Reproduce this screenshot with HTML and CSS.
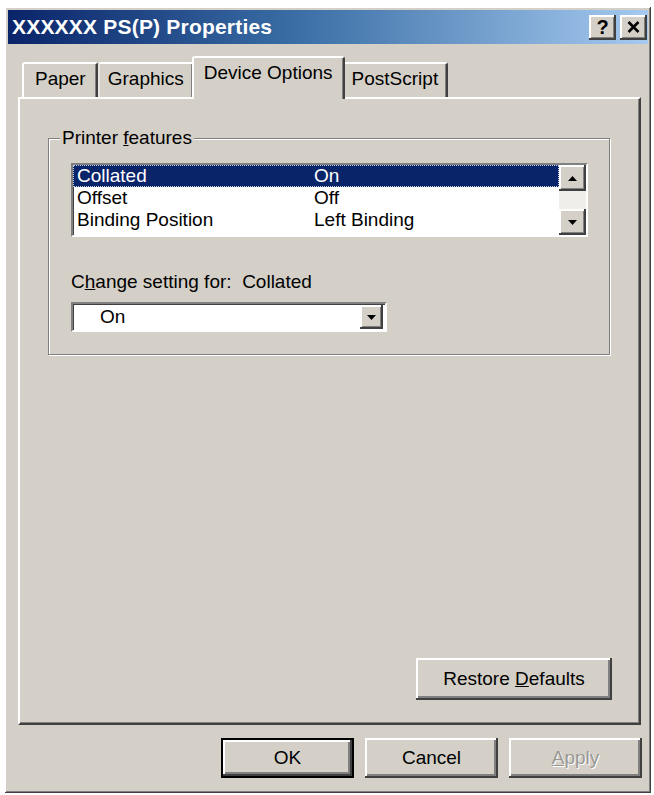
FILE: index.html
```html
<!DOCTYPE html>
<html lang="en">
<head>
  <meta charset="UTF-8">
  <title>PS(P) Properties</title>
  <link rel="stylesheet" href="styles.css">
</head>
<body>
  <div class="window">
    <div class="titlebar">
      <span class="title">XXXXXX PS(P) Properties</span>
      <div class="caption-buttons">
        <span class="cap-btn help">?</span>
        <span class="cap-btn close">
          <svg width="13" height="12" viewBox="0 0 13 12">
            <path d="M1.5 1 L11.5 11 M11.5 1 L1.5 11" stroke="#000" stroke-width="2.6" fill="none"/>
          </svg>
        </span>
      </div>
    </div>

    <div class="dialog">
      <div class="tabs">
        <div class="tab first">Paper</div>
        <div class="tab">Graphics</div>
        <div class="tab active">Device Options</div>
        <div class="tab">PostScript</div>
      </div>

      <div class="panel">
        <fieldset class="group">
          <legend>Printer <u>f</u>eatures</legend>

          <div class="listbox">
            <div class="list-rows">
              <div class="row selected"><span class="col-name">Collated</span><span>On</span></div>
              <div class="row"><span class="col-name">Offset</span><span>Off</span></div>
              <div class="row"><span class="col-name">Binding Position</span><span>Left Binding</span></div>
            </div>
            <div class="scrollbar">
              <div class="sb-btn">
                <svg width="9" height="5" viewBox="0 0 9 5"><path d="M0 5 L4.5 0 L9 5 Z" fill="#000"/></svg>
              </div>
              <div class="sb-track"></div>
              <div class="sb-btn">
                <svg width="9" height="5" viewBox="0 0 9 5"><path d="M0 0 L9 0 L4.5 5 Z" fill="#000"/></svg>
              </div>
            </div>
          </div>

          <div class="setting-label">C<u>h</u>ange setting for:&nbsp; Collated</div>
          <div class="combo">
            <span class="combo-value">On</span>
            <div class="combo-btn">
              <svg width="9" height="5" viewBox="0 0 9 5"><path d="M0 0 L9 0 L4.5 5 Z" fill="#000"/></svg>
            </div>
          </div>
        </fieldset>

        <div class="panel-actions">
          <button class="btn restore">Restore <u>D</u>efaults</button>
        </div>
      </div>

      <div class="dialog-buttons">
        <button class="btn default">OK</button>
        <button class="btn">Cancel</button>
        <button class="btn" disabled><u>A</u>pply</button>
      </div>
    </div>
  </div>
</body>
</html>
```

FILE: styles.css
```css
body {
  margin: 0;
  padding: 7px 0 0 5px;
  background: #fff;
  font-family: "Liberation Sans", Arial, sans-serif;
  font-size: 19px;
  color: #000;
}
.window {
  width: 646px;
  height: 786px;
  box-sizing: border-box;
  padding: 3px;
  background: #d4d0c8;
  display: flex;
  flex-direction: column;
  box-shadow: inset -1px -1px #404040, inset 1px 1px #fff, inset -2px -2px #808080;
}

/* caption */
.titlebar {
  height: 34px;
  flex: none;
  display: flex;
  align-items: center;
  justify-content: space-between;
  padding: 0 1px 0 4px;
  background: linear-gradient(to right, #0a246a 0%, #3a6ea5 45%, #a6caf0 100%);
}
.title {
  color: #fff;
  font-weight: bold;
  font-size: 21px;
  letter-spacing: 0.2px;
}
.caption-buttons {
  display: flex;
  gap: 4px;
}
.cap-btn {
  width: 27px;
  height: 25px;
  box-sizing: border-box;
  display: flex;
  align-items: center;
  justify-content: center;
  background: #d4d0c8;
  box-shadow: inset -2px -2px #404040, inset 2px 2px #fff, inset -3px -3px #808080;
  font-weight: bold;
  font-size: 20px;
}

.dialog {
  flex: 1;
  display: flex;
  flex-direction: column;
  padding: 12px 6px 12px 10px;
}

/* tab strip */
.tabs {
  height: 41px;
  display: flex;
  align-items: flex-end;
  padding-left: 4px;
}
.tab {
  height: 35px;
  box-sizing: border-box;
  padding: 4px 8px 0;
  line-height: 22px;
  border-top: 2px solid #fff;
  border-left: 2px solid #fff;
  border-right: 2px solid #404040;
  border-radius: 3px 3px 0 0;
  box-shadow: inset -1px 0 #808080;
  white-space: nowrap;
}
.tab.first {
  padding: 4px 10px 0 11px;
}
.tab + .tab {
  border-left-color: #e8e6e1;
}
.tab.active {
  height: 43px;
  margin: 0 -2px -2px;
  padding: 4px 10px 0 10px;
  border-left-color: #fff;
  background: #d4d0c8;
  position: relative;
  z-index: 1;
}
.tab.active + .tab {
  border-left: none;
  padding-left: 9px;
}

/* page body */
.panel {
  flex: 1;
  margin-right: 1px;
  display: flex;
  flex-direction: column;
  padding: 28px 27px 23px 28px;
  border-top: 2px solid #fff;
  border-left: 2px solid #fff;
  border-right: 2px solid #404040;
  border-bottom: 2px solid #404040;
  box-shadow: inset -1px -1px #808080;
}

.group {
  margin: 0 2px 0 0;
  padding: 14px 21px 22px 22px;
  border: 1px solid #808080;
  box-shadow: inset 1px 1px #fff, 1px 1px #fff;
}
.group legend {
  margin-left: -11px;
  padding: 0 2px;
  line-height: 22px;
  background: #d4d0c8;
}

/* list of features */
.listbox {
  width: 517px;
  height: 74px;
  box-sizing: border-box;
  display: flex;
  background: #fff;
  border: 2px solid;
  border-color: #808080 #fff #fff #808080;
  box-shadow: inset 1px 1px #404040;
}
.list-rows {
  flex: 1;
}
.row {
  height: 22px;
  box-sizing: border-box;
  display: flex;
  line-height: 20px;
  padding-left: 3px;
  border: 1px solid transparent;
}
.row.selected {
  background: #0a246a;
  color: #fff;
  border: 1px dotted #c9cde0;
}
.col-name {
  width: 237px;
}
.scrollbar {
  width: 27px;
  display: flex;
  flex-direction: column;
}
.sb-btn {
  height: 26px;
  display: flex;
  align-items: center;
  justify-content: center;
  background: #d4d0c8;
  box-shadow: inset -2px -2px #404040, inset 2px 2px #fff, inset -3px -3px #808080;
}
.sb-track {
  flex: 1;
  background: #efeeea;
}

.setting-label {
  margin-top: 34px;
  line-height: 22px;
}

/* drop-down */
.combo {
  width: 316px;
  height: 30px;
  margin-top: 9px;
  box-sizing: border-box;
  display: flex;
  align-items: center;
  justify-content: space-between;
  padding: 0 2px 0 27px;
  background: #fff;
  border: 2px solid;
  border-color: #808080 #fff #fff #808080;
  box-shadow: inset 1px 1px #404040;
}
.combo-btn {
  width: 23px;
  height: 24px;
  display: flex;
  align-items: center;
  justify-content: center;
  background: #d4d0c8;
  box-shadow: inset -2px -2px #404040, inset 2px 2px #fff, inset -3px -3px #808080;
}

/* push buttons */
.btn {
  font-family: "Liberation Sans", Arial, sans-serif;
  font-size: 19px;
  color: #000;
  background: #d4d0c8;
  border: none;
  padding: 0;
  box-shadow: inset -2px -2px #404040, inset 2px 2px #fff, inset -4px -4px #808080;
}
.btn:disabled {
  color: #9a9894;
  text-shadow: 1px 1px #fff;
}
.btn.default {
  border: 2px solid #000;
}
.panel-actions {
  margin-top: auto;
  display: flex;
  justify-content: flex-end;
}
.restore {
  width: 196px;
  height: 42px;
}
.dialog-buttons {
  margin-top: 13px;
  display: flex;
  justify-content: flex-end;
  gap: 11px;
}
.dialog-buttons .btn {
  width: 133px;
  height: 40px;
}
```
